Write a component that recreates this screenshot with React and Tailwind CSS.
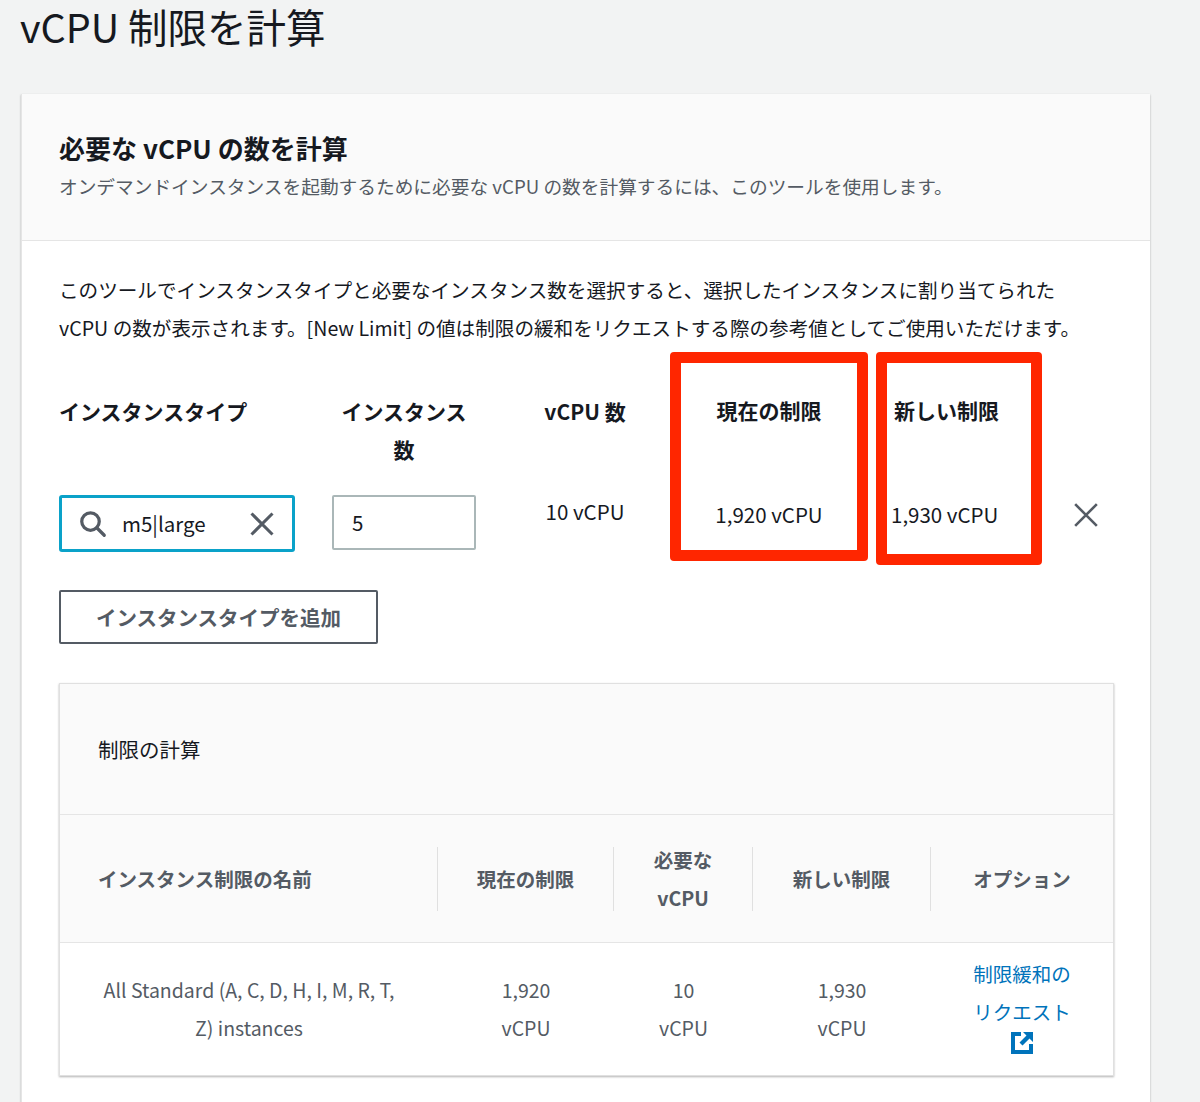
import React from "react";

const F = { fontFamily: '"Noto Sans CJK JP", "Noto Sans", sans-serif' };

export default function App() {
  return (
    <div className="w-[1200px] h-[1102px] bg-[#f2f3f3] overflow-hidden text-[#16191f]" style={F}>
      <h1 className="pl-[20px] pt-[0px] text-[39.5px] leading-[52px] h-[94px]">vCPU 制限を計算</h1>
      <div className="ml-[21px] w-[1129px] bg-white shadow-[0_1px_2px_rgba(0,0,0,0.3)] border-l border-[#e5e5e5]">
        <div className="bg-[#fafafa] h-[147px] border-b border-[#e5e5e5] px-[37px] pt-[36px]">
          <div className="text-[26px] font-bold leading-[36px]">必要な vCPU の数を計算</div>
          <div className="text-[18.7px] text-[#545b64] mt-[6px]">オンデマンドインスタンスを起動するために必要な vCPU の数を計算するには、このツールを使用します。</div>
        </div>
        <div className="px-[37px] pt-[30px]">
          <p className="text-[19.6px] leading-[38px]">このツールでインスタンスタイプと必要なインスタンス数を選択すると、選択したインスタンスに割り当てられた<br />vCPU の数が表示されます。[New Limit] の値は制限の緩和をリクエストする際の参考値としてご使用いただけます。</p>
          <div className="flex mt-[39px] h-[212px] relative">
            <div className="w-[273px]">
              <div className="text-[21px] font-bold h-[38px] leading-[38px] mt-[6px]">インスタンスタイプ</div>
              <div className="mt-[65px] w-[236px] h-[57px] border-[3px] border-[#0aa2c9] rounded-[3px] flex items-center px-[16px]">
                <svg width="30" height="30" viewBox="0 0 24 24" fill="none" stroke="#545b64" strokeWidth="2.6" strokeLinecap="round"><circle cx="10" cy="10" r="7" /><path d="M15 15l6 6" /></svg>
                <span className="ml-[14px] text-[20.5px]">m5|large</span>
                <svg className="ml-auto" width="28" height="28" viewBox="0 0 24 24" stroke="#545b64" strokeWidth="2.6"><path d="M3 3l18 18M21 3L3 21" /></svg>
              </div>
            </div>
            <div className="w-[190px]">
              <div className="w-[144px] text-center text-[21px] font-bold leading-[38px] mt-[6px]">インスタンス<br />数</div>
              <div className="mt-[27px] w-[144px] h-[55px] border-2 border-[#aab7b8] rounded-[2px] flex items-center px-[18px] text-[20.5px]">5</div>
            </div>
            <div className="w-[150px] text-center">
              <div className="text-[21px] font-bold leading-[38px] mt-[6px] -ml-[24px]">vCPU 数</div>
              <div className="mt-[66px] text-[20.5px] -ml-[24px]">10 vCPU</div>
            </div>
            <div className="absolute left-[611px] top-[-34px] w-[198px] h-[209px] border-[11px] border-[#ff2600] rounded-[4px] text-center">
              <div className="text-[21px] font-bold mt-[32px]">現在の制限</div>
              <div className="text-[20.5px] mt-[72px]">1,920 vCPU</div>
            </div>
            <div className="absolute left-[817px] top-[-34px] w-[166px] h-[213px] border-[11px] border-[#ff2600] rounded-[4px]">
              <div className="text-[21px] font-bold mt-[32px] ml-[7px]">新しい制限</div>
              <div className="text-[20.5px] mt-[72px] ml-[4px]">1,930 vCPU</div>
            </div>
            <svg className="absolute left-[1014px] top-[116px]" width="26" height="26" viewBox="0 0 24 24" stroke="#545b64" strokeWidth="2.4"><path d="M2 2l20 20M22 2L2 22" /></svg>
          </div>
          <button className="mt-[-8px] w-[319px] h-[54px] border-2 border-[#545b64] rounded-[2px] text-[20.5px] font-bold text-[#545b64]">インスタンスタイプを追加</button>
          <div className="mt-[39px] w-[1055px] border border-[#e0e0e0] shadow-[0_1px_2px_rgba(0,0,0,0.3)]">
            <div className="bg-[#fafafa] h-[131px] px-[38px] flex items-center text-[20.5px] border-b border-[#e5e5e5]">制限の計算</div>
            <div className="bg-[#fafafa] h-[128px] flex items-center text-[19.5px] font-bold text-[#545b64] border-b border-[#e5e5e5]">
              <div className="w-[378px] pl-[38px] h-[64px] flex items-center border-r border-[#e0e0e0]">インスタンス制限の名前</div>
              <div className="w-[176px] h-[64px] flex items-center justify-center border-r border-[#e0e0e0]">現在の制限</div>
              <div className="w-[139px] h-[64px] flex items-center justify-center border-r border-[#e0e0e0] text-center leading-[38px]">必要な<br />vCPU</div>
              <div className="w-[178px] h-[64px] flex items-center justify-center border-r border-[#e0e0e0]">新しい制限</div>
              <div className="flex-1 h-[64px] flex items-center justify-center">オプション</div>
            </div>
            <div className="h-[132px] flex items-center text-[19.5px] text-[#545b64] leading-[38px] text-center">
              <div className="w-[378px]">All Standard (A, C, D, H, I, M, R, T,<br />Z) instances</div>
              <div className="w-[176px]">1,920<br />vCPU</div>
              <div className="w-[139px]">10<br />vCPU</div>
              <div className="w-[178px]">1,930<br />vCPU</div>
              <div className="flex-1 text-[#0073bb] -mt-[6px]">制限緩和の<br />リクエスト
                <div className="flex justify-center -mt-[2px]">
                  <svg width="28" height="28" viewBox="0 0 28 28"><path d="M3 3h10v4H7v14h14v-6h4v10H3z" fill="#0073bb" /><path d="M15 3h10v10l-3.5-3.5-7 7-3-3 7-7z" fill="#0073bb" /></svg>
                </div>
              </div>
            </div>
          </div>
          <div className="h-[40px]" />
        </div>
      </div>
    </div>
  );
}
